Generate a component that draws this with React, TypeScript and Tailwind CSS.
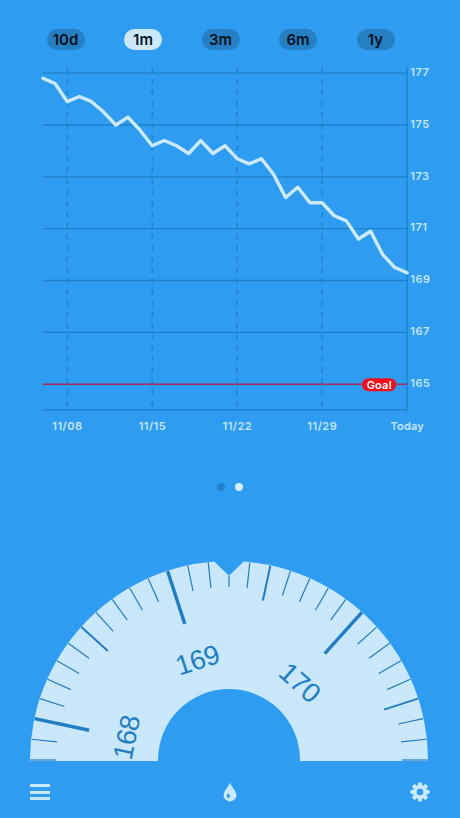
const ranges = ['10d', '1m', '3m', '6m', '1y']

const weights = [
  176.8, 176.6, 175.9, 176.1, 175.9, 175.5, 175, 175.3, 174.8, 174.2, 174.4,
  174.2, 173.9, 174.4, 173.9, 174.2, 173.7, 173.5, 173.7, 173.1, 172.2, 172.6,
  172, 172, 171.5, 171.3, 170.6, 170.9, 170, 169.5, 169.3,
]

const weeks = [
  { day: 2, label: '11/08' },
  { day: 9, label: '11/15' },
  { day: 16, label: '11/22' },
  { day: 23, label: '11/29' },
]

const goal = 165
const current = 169.3

// chart coordinates, the svg starts 60px below the top of the screen
const chartX = (day: number) => 43 + (day * 364) / 30
const chartY = (value: number) => 324.2 - (value - 165) * 25.92

function RangeTabs({ active }: { active: string }) {
  return (
    <nav className="flex h-[60px] gap-[39.5px] pt-[29px] pl-[46.5px]">
      {ranges.map((range) => (
        <button
          key={range}
          className={`h-[21px] w-[38px] rounded-full text-[15px] leading-[21px] font-semibold text-[#04111d] ${
            range === active ? 'bg-[#cde8fc]' : 'bg-[#267fc2]'
          }`}
        >
          {range}
        </button>
      ))}
    </nav>
  )
}

function Chart() {
  const points = weights.map((w, i) => `${chartX(i)},${chartY(w)}`).join(' ')

  return (
    <svg width="460" height="385" viewBox="0 0 460 385" className="block shrink-0">
      <g stroke="#207fc6" strokeWidth="1.3">
        {weeks.map(({ day }) => (
          <line
            key={day}
            x1={chartX(day)}
            x2={chartX(day)}
            y1="7.7"
            y2="349.7"
            strokeDasharray="5.4 5.7"
          />
        ))}
        {[177, 175, 173, 171, 169, 167].map((v) => (
          <line key={v} x1="43" x2="407" y1={chartY(v)} y2={chartY(v)} />
        ))}
        <line x1="43" x2="407.5" y1="349.8" y2="349.8" />
        <line x1="407.1" x2="407.1" y1="7.5" y2="349.8" />
      </g>

      <line x1="43" x2="407" y1={chartY(goal)} y2={chartY(goal)} stroke="#a12d59" strokeWidth="1.6" />
      <rect x="362" y="318.2" width="34.2" height="13" rx="6.5" fill="#f20d1b" />
      <text x="379.2" y="328.5" textAnchor="middle" fill="#fff" className="text-[11px] font-semibold tracking-[0.2px]">
        Goal
      </text>

      <polyline
        points={points}
        fill="none"
        stroke="#cdeafd"
        strokeWidth="3.4"
        strokeLinejoin="round"
        strokeLinecap="round"
      />

      <g fill="#c5e5fc" className="text-[11px] font-semibold tracking-[0.5px]">
        {[177, 175, 173, 171, 169, 167, 165].map((v) => (
          <text key={v} x="410.3" y={chartY(v) + 2.7}>
            {v}
          </text>
        ))}
        {weeks.map(({ day, label }) => (
          <text key={day} x={chartX(day) + 0.2} y="370.2" textAnchor="middle">
            {label}
          </text>
        ))}
        <text x="407.2" y="370.2" textAnchor="middle" className="tracking-[0.2px]">
          Today
        </text>
      </g>
    </svg>
  )
}

function Dial() {
  const ticks = Array.from({ length: 31 }, (_, i) => i - 15)

  return (
    <svg width="460" height="201" viewBox="0 0 460 201" className="block shrink-0 overflow-visible">
      <g transform="translate(229 200)">
        <path
          d="M-199 1V0A199 199 0 0 1-14.8-198.4L0-184.3L14.8-198.4A199 199 0 0 1 199 0V1H71V0A71 71 0 0 0-71 0V1Z"
          fill="#c9e7fd"
        />
        {ticks.map((t) => {
          const tenth = Math.round(current * 10) + t
          const major = tenth % 10 === 0
          const medium = tenth % 5 === 0
          return (
            <line
              key={t}
              y1={t === 0 ? -184.3 : -198.6}
              y2={major ? -143 : medium ? -163 : -173}
              stroke="#217dc2"
              strokeWidth={major ? 3.4 : medium ? 2 : 1.2}
              transform={`rotate(${t * 6})`}
            />
          )
        })}
        {[168, 169, 170].map((v) => (
          <text
            key={v}
            x="0.8"
            y="-95.5"
            textAnchor="middle"
            fill="#217dc2"
            transform={`rotate(${(v - current) * 60})`}
            className="font-['Liberation_Sans'] text-[27.5px] leading-none tracking-[-0.5px]"
          >
            {v}
          </text>
        ))}
      </g>
    </svg>
  )
}

function Drop() {
  return (
    <svg width="14" height="20" viewBox="0 0 14 20">
      <path d="M7 .6C6 4.5.6 9 .6 13.2a6.4 6.2 0 0 0 12.8 0C13.4 9 8 4.5 7 .6Z" fill="#cbe9fd" />
      <path d="M5.3 10.8C5 12.2 3.6 13 3.6 14.2a1.7 1.7 0 0 0 3.4 0C7 13 5.6 12.2 5.3 10.8Z" fill="#2e9df1" />
    </svg>
  )
}

function Gear() {
  return (
    <svg width="20" height="20" viewBox="-10 -10 20 20">
      <g fill="#cbe9fd">
        {[0, 45, 90, 135].map((a) => (
          <rect key={a} x="-2.1" y="-9.6" width="4.2" height="19.2" rx="1" transform={`rotate(${a})`} />
        ))}
        <circle r="7.2" />
      </g>
      <circle r="3.3" fill="#2e9df1" />
    </svg>
  )
}

export default function App() {
  return (
    <main className="flex h-[818px] w-[460px] flex-col overflow-hidden bg-[#2e9df1] font-['Inter',sans-serif]">
      <RangeTabs active="1m" />
      <Chart />
      <div className="flex h-[115px] items-start justify-center gap-[9.5px] pt-[38px]">
        <span className="size-2 rounded-full bg-[#1d82cb]" />
        <span className="size-2 rounded-full bg-[#d5effe]" />
      </div>
      <Dial />
      <footer className="flex h-[57px] items-start justify-between pt-[20.5px] pr-[29.8px] pl-[30px]">
        <button className="flex w-[19.5px] flex-col gap-[3.4px] pt-[2.7px]">
          <span className="h-[3px] bg-[#cbe9fd]" />
          <span className="h-[3px] bg-[#cbe9fd]" />
          <span className="h-[3px] bg-[#cbe9fd]" />
        </button>
        <Drop />
        <Gear />
      </footer>
    </main>
  )
}
